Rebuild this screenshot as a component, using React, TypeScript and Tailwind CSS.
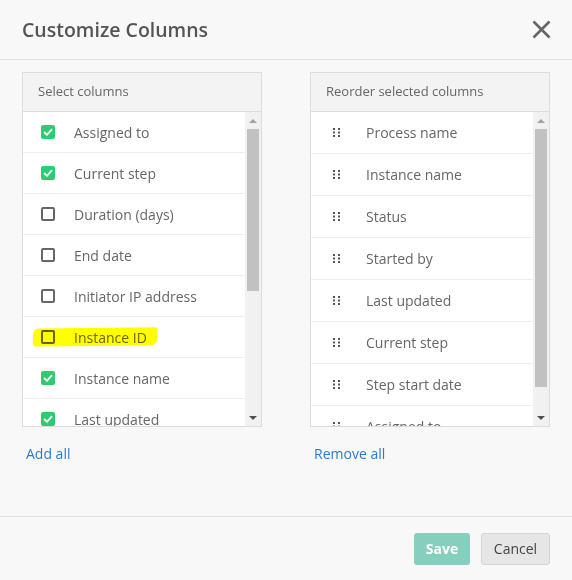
import React from "react";

const selectCols = [
  { label: "Assigned to", checked: true },
  { label: "Current step", checked: true },
  { label: "Duration (days)", checked: false },
  { label: "End date", checked: false },
  { label: "Initiator IP address", checked: false },
  { label: "Instance ID", checked: false, mark: true },
  { label: "Instance name", checked: true },
  { label: "Last updated", checked: true },
];

const orderCols = [
  "Process name",
  "Instance name",
  "Status",
  "Started by",
  "Last updated",
  "Current step",
  "Step start date",
  "Assigned to",
];

function Check({ on }: { on: boolean }) {
  if (on) {
    return (
      <span className="w-[14px] h-[14px] rounded-[2px] bg-[#2ecc71] flex items-center justify-center">
        <svg width="10" height="8" viewBox="0 0 10 8">
          <path d="M1 4 L4 6.8 L9 1.2" fill="none" stroke="#fff" strokeWidth="1.8" />
        </svg>
      </span>
    );
  }
  return <span className="w-[14px] h-[14px] rounded-[2px] border-2 border-[#666]" />;
}

function Grip() {
  return (
    <svg width="8" height="9" viewBox="0 0 8 9" className="fill-[#555]">
      <rect x="0" y="0" width="2" height="2" />
      <rect x="5" y="0" width="2" height="2" />
      <rect x="0" y="3.5" width="2" height="2" />
      <rect x="5" y="3.5" width="2" height="2" />
      <rect x="0" y="7" width="2" height="2" />
      <rect x="5" y="7" width="2" height="2" />
    </svg>
  );
}

// fake scrollbar so the render doesn't depend on the browser's
function Scrollbar({ thumbTop, thumbHeight }: { thumbTop: number; thumbHeight: number }) {
  return (
    <div className="w-[16px] shrink-0 bg-[#f1f1f1] flex flex-col items-center">
      <div className="h-[17px] flex items-center justify-center">
        <span className="w-0 h-0 border-x-[4px] border-x-transparent border-b-[4px] border-b-[#a3a3a3]" />
      </div>
      <div className="w-[12px] bg-[#c1c1c1]" style={{ marginTop: thumbTop, height: thumbHeight }} />
      <div className="flex-1" />
      <div className="h-[17px] flex items-center justify-center">
        <span className="w-0 h-0 border-x-[4px] border-x-transparent border-t-[4px] border-t-[#505050]" />
      </div>
    </div>
  );
}

function Panel({ title, children, bar }: { title: string; children: React.ReactNode; bar: React.ReactNode }) {
  return (
    <div className="w-[240px] border border-[#dcdcdc] bg-white">
      <div className="h-[39px] bg-[#f3f3f3] border-b border-[#dcdcdc] flex items-center px-[15px] text-[13px] text-[#666]">
        {title}
      </div>
      <div className="h-[314px] flex">
        <div className="flex-1 overflow-hidden">{children}</div>
        {bar}
      </div>
    </div>
  );
}

export default function App() {
  return (
    <div
      className="w-[572px] h-[580px] bg-[#f8f8f8] flex flex-col"
      style={{ fontFamily: '"Open Sans", "Noto Sans", sans-serif' }}
    >
      <div className="h-[60px] border-b border-[#e1e1e1] flex items-center justify-between pl-[22px] pr-[21px] shrink-0">
        <h1 className="text-[19.5px] font-semibold text-[#555] leading-none">Customize Columns</h1>
        <svg width="19" height="19" viewBox="0 0 19 19">
          <path d="M1.5 1.5 L17.5 17.5 M17.5 1.5 L1.5 17.5" stroke="#666" strokeWidth="2.6" />
        </svg>
      </div>

      <div className="flex-1 pt-[12px] px-[22px]">
        <div className="flex gap-[48px]">
          <div className="flex flex-col">
            <Panel title="Select columns" bar={<Scrollbar thumbTop={0} thumbHeight={162} />}>
              {selectCols.map((c) => (
                <div key={c.label} className="h-[41px] shrink-0 border-b border-[#eeeeee] flex items-center relative">
                  {c.mark && (
                    <span className="absolute left-[10px] top-[11px] w-[124px] h-[18px] bg-[#ffff00] rounded-tl-[6px] rounded-tr-[2px] rounded-br-[6px] rounded-bl-[3px] -rotate-[0.6deg]" />
                  )}
                  <span className="relative pl-[18px] flex items-center mix-blend-multiply">
                    <Check on={c.checked} />
                  </span>
                  <span className="relative ml-[19px] text-[14px] text-[#666] mix-blend-multiply">{c.label}</span>
                </div>
              ))}
            </Panel>
            <a className="mt-[16px] ml-[4px] text-[14px] text-[#2b7bd3]">Add all</a>
          </div>

          <div className="flex flex-col">
            <Panel title="Reorder selected columns" bar={<Scrollbar thumbTop={0} thumbHeight={258} />}>
              {orderCols.map((c) => (
                <div key={c} className="h-[42px] shrink-0 border-b border-[#eeeeee] flex items-center">
                  <span className="pl-[22px] flex items-center">
                    <Grip />
                  </span>
                  <span className="ml-[25px] text-[14px] text-[#666]">{c}</span>
                </div>
              ))}
            </Panel>
            <a className="mt-[16px] ml-[4px] text-[14px] text-[#2b7bd3]">Remove all</a>
          </div>
        </div>
      </div>

      <div className="h-[64px] border-t border-[#e1e1e1] flex items-center justify-end gap-[11px] pr-[22px] shrink-0">
        <button className="h-[32px] w-[56px] rounded-[3px] bg-[#86cfbe] text-white text-[14px] font-bold">Save</button>
        <button className="h-[32px] w-[69px] rounded-[3px] bg-[#e6e6e6] border border-[#d4d4d4] text-[14px] text-[#444]">
          Cancel
        </button>
      </div>
    </div>
  );
}
